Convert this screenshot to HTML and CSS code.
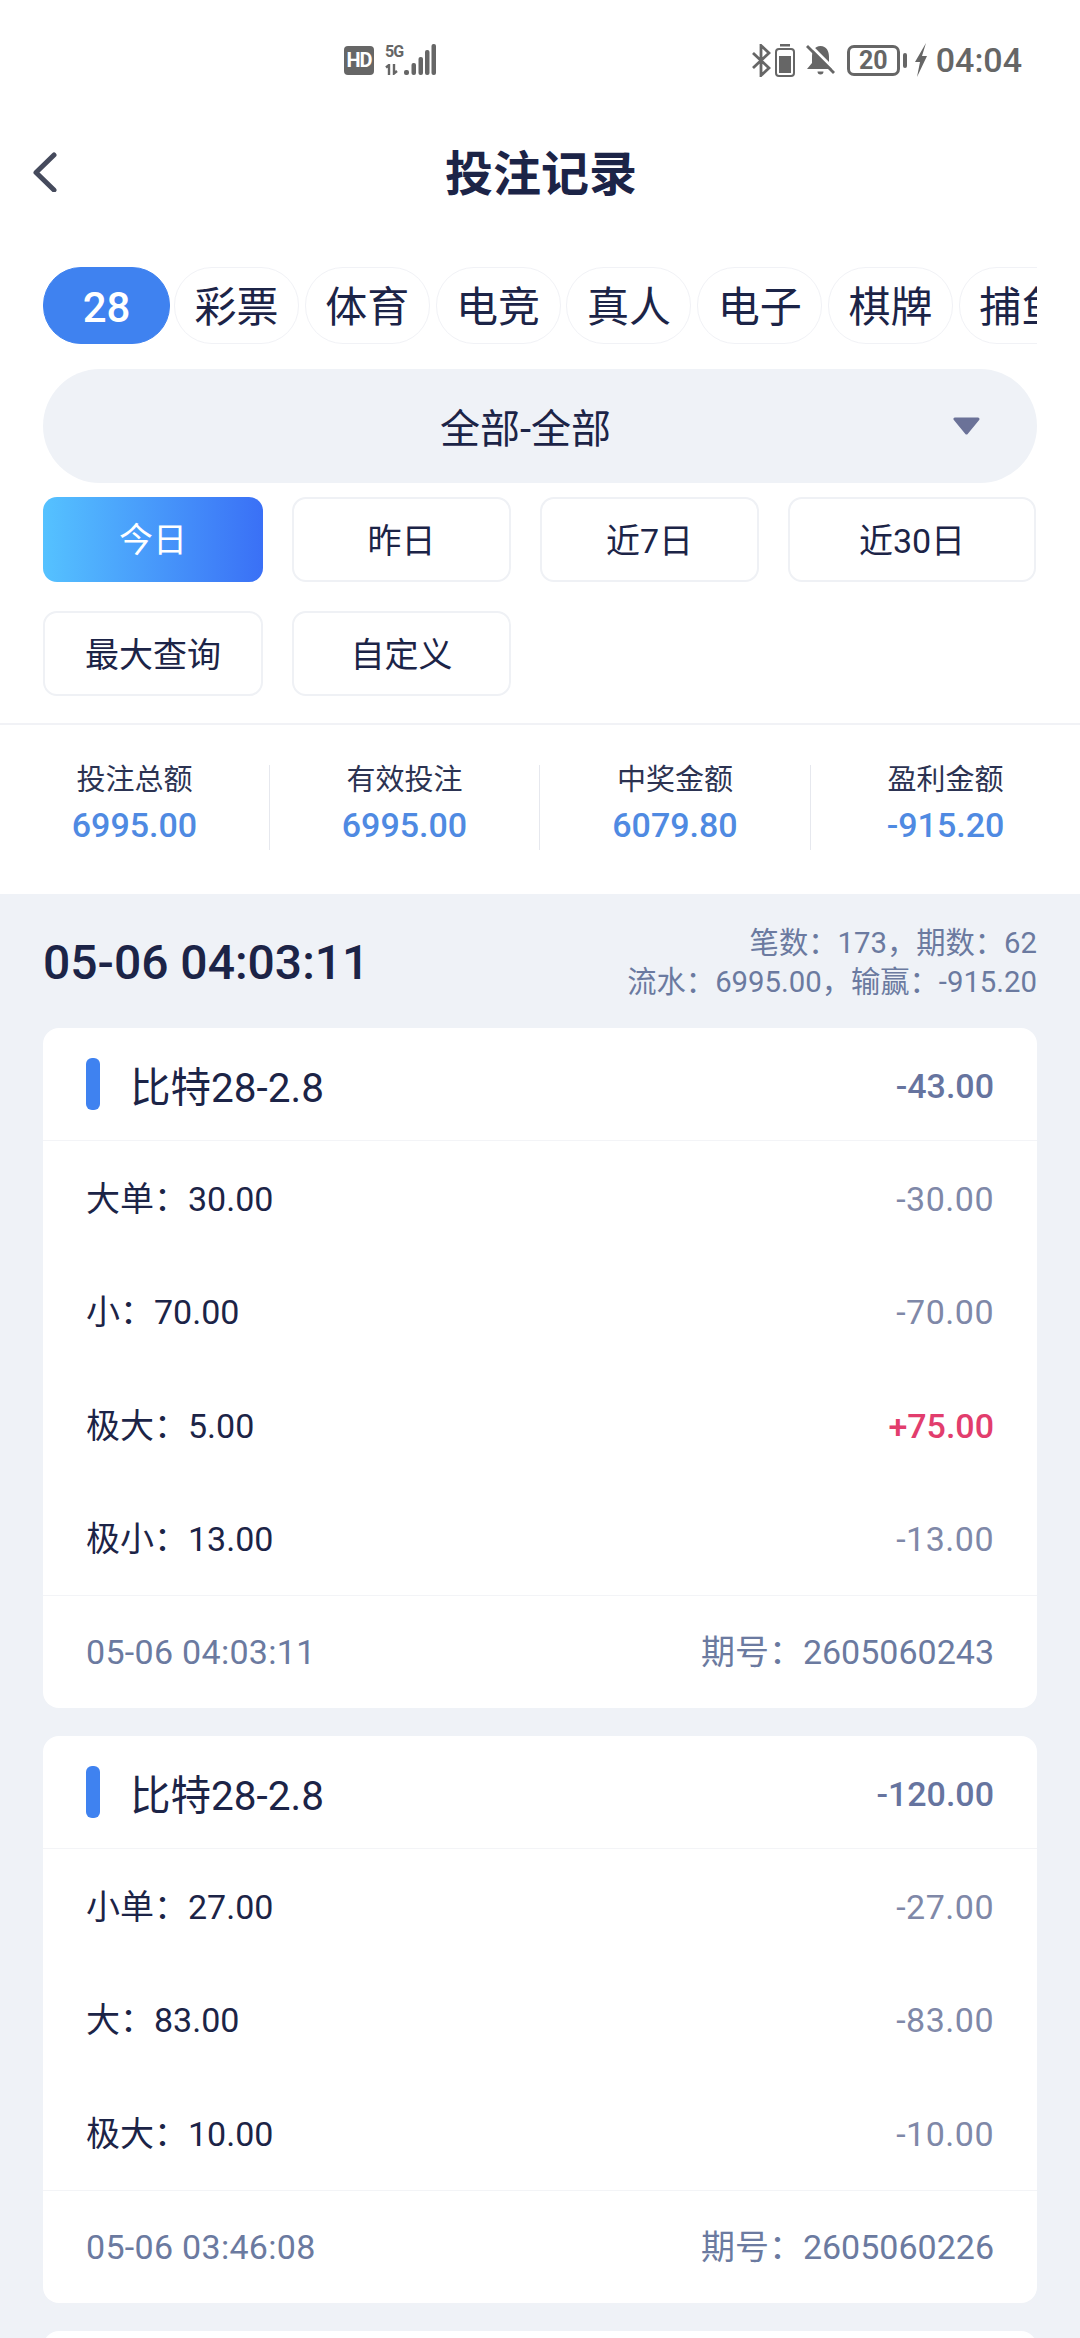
FILE: index.html
```html
<!DOCTYPE html>
<html lang="zh-CN">
<head>
  <meta charset="UTF-8" />
  <meta name="viewport" content="width=device-width, initial-scale=1.0"/>
  <title>投注记录</title>
  <link rel="stylesheet" href="styles.css">
</head>
<body>
  <div class="status-bar">
    <div class="status-left">
      <span class="hd-badge">HD</span>
      <div class="net">
        <span class="net-label">5G</span>
        <svg class="net-arrows" width="13" height="11" viewBox="0 0 13 11">
          <path d="M1 3.500 4 1V11M9 0V9.500L12 7" fill="none" stroke="#666" stroke-width="2.400"/>
        </svg>
      </div>
      <svg class="signal" width="32" height="32" viewBox="0 0 32 32">
        <rect x="0" y="26" width="5" height="5" rx="2" fill="#666"/>
        <rect x="7.500" y="19" width="4.500" height="12" rx="2" fill="#666"/>
        <rect x="14.500" y="13" width="4.500" height="18" rx="2" fill="#666"/>
        <rect x="21" y="6" width="4.500" height="25" rx="2" fill="#666"/>
        <rect x="27.500" y="0" width="4.500" height="31" rx="2" fill="#666"/>
      </svg>
    </div>
    <div class="status-right">
      <svg class="ic-bt" width="19" height="33" viewBox="0 0 19 33">
        <path d="M1 9 17 24 9 31.500V1.500L17 9 1 24" fill="none" stroke="#666" stroke-width="2.800"/>
      </svg>
      <svg class="ic-cell" width="20" height="33" viewBox="0 0 20 33">
        <rect x="5" y="0" width="10" height="2.500" fill="#666"/>
        <rect x="1" y="5" width="18" height="27" rx="3" fill="none" stroke="#666" stroke-width="2"/>
        <rect x="4" y="12" width="12" height="17" fill="#666"/>
      </svg>
      <svg class="ic-bell" width="29" height="30" viewBox="0 0 29 30">
        <path d="M14.500 1C8.500 1 6 6 6 12V18L1 24H28L23 18V12C23 6 20.500 1 14.500 1Z" fill="#666"/>
        <path d="M11.500 26.500H17.500A3 3 0 0 1 11.500 26.500Z" fill="#666"/>
        <path d="M4 0 30 26" stroke="#fff" stroke-width="3"/>
        <path d="M1 1 28 28" stroke="#666" stroke-width="2.800"/>
      </svg>
      <span class="battery">20</span>
      <span class="battery-nub"></span>
      <svg class="ic-bolt" width="13" height="34" viewBox="0 0 13 34">
        <path d="M12 0 1 19H6L3 34 13 13H8Z" fill="#666"/>
      </svg>
      <span class="clock">04:04</span>
    </div>
  </div>

  <div class="header">
    <svg class="back" width="24" height="40" viewBox="0 0 24 40">
      <path d="M21 3 3 20.500 21 38" fill="none" stroke="#454a5c" stroke-width="5" stroke-linecap="round" stroke-linejoin="round"/>
    </svg>
    <h1>投注记录</h1>
  </div>

  <div class="tabs">
    <div class="tab active">28</div>
    <div class="tab">彩票</div>
    <div class="tab">体育</div>
    <div class="tab">电竞</div>
    <div class="tab">真人</div>
    <div class="tab">电子</div>
    <div class="tab">棋牌</div>
    <div class="tab">捕鱼</div>
  </div>

  <div class="select">
    <span class="select-text">全部-全部</span>
    <svg class="select-arrow" width="29" height="18" viewBox="0 0 29 18">
      <path d="M3 2H26L14.500 16Z" fill="#6b7298" stroke="#6b7298" stroke-width="3" stroke-linejoin="round"/>
    </svg>
  </div>

  <div class="ranges">
    <div class="range active">今日</div>
    <div class="range">昨日</div>
    <div class="range">近7日</div>
    <div class="range">近30日</div>
    <div class="range">最大查询</div>
    <div class="range">自定义</div>
  </div>

  <div class="stats">
    <div class="stat">
      <div class="stat-label">投注总额</div>
      <div class="stat-value">6995.00</div>
    </div>
    <div class="stat">
      <div class="stat-label">有效投注</div>
      <div class="stat-value">6995.00</div>
    </div>
    <div class="stat">
      <div class="stat-label">中奖金额</div>
      <div class="stat-value">6079.80</div>
    </div>
    <div class="stat">
      <div class="stat-label">盈利金额</div>
      <div class="stat-value">-915.20</div>
    </div>
  </div>

  <div class="records">
    <div class="day-head">
      <div class="day-date">05-06 04:03:11</div>
      <div class="day-sum">
        <div>笔数：173，期数：62</div>
        <div>流水：6995.00，输赢：-915.20</div>
      </div>
    </div>

    <div class="card">
      <div class="card-head">
        <span class="card-bar"></span>
        <span class="card-title">比特28-2.8</span>
        <span class="card-total">-43.00</span>
      </div>
      <div class="row"><span>大单：30.00</span><span class="amount">-30.00</span></div>
      <div class="row"><span>小：70.00</span><span class="amount">-70.00</span></div>
      <div class="row"><span>极大：5.00</span><span class="amount win">+75.00</span></div>
      <div class="row"><span>极小：13.00</span><span class="amount">-13.00</span></div>
      <div class="card-foot"><span class="foot-time">05-06 04:03:11</span><span>期号：2605060243</span></div>
    </div>

    <div class="card">
      <div class="card-head">
        <span class="card-bar"></span>
        <span class="card-title">比特28-2.8</span>
        <span class="card-total">-120.00</span>
      </div>
      <div class="row"><span>小单：27.00</span><span class="amount">-27.00</span></div>
      <div class="row"><span>大：83.00</span><span class="amount">-83.00</span></div>
      <div class="row"><span>极大：10.00</span><span class="amount">-10.00</span></div>
      <div class="card-foot"><span class="foot-time">05-06 03:46:08</span><span>期号：2605060226</span></div>
    </div>

    <div class="card card-next"></div>
  </div>
</body>
</html>
```

FILE: styles.css
```css
html, body {
  margin: 0;
  height: 2338px;
  overflow: hidden;
}

body {
  background-color: #fff;
  color: #1c2447;
  font-family: Roboto, "Noto Sans CJK SC", sans-serif;
}

/* status bar */
.status-bar {
  height: 120px;
  padding: 0 58px 0 344px;
  display: flex;
  justify-content: space-between;
  align-items: center;
}

.status-left, .status-right {
  display: flex;
  align-items: center;
}

.hd-badge {
  width: 30px;
  height: 29px;
  background-color: #666;
  border-radius: 4px;
  color: #fff;
  font-size: 20px;
  font-weight: 700;
  letter-spacing: -1px;
  line-height: 29px;
  text-align: center;
}

.net {
  margin-left: 11px;
  width: 17px;
  display: flex;
  flex-direction: column;
  gap: 6px;
}

.net-label {
  color: #666;
  font-size: 16px;
  font-weight: 700;
  letter-spacing: -1px;
  line-height: 13px;
}

.signal {
  margin-left: 2px;
}

.ic-cell { margin-left: 4px; }
.ic-bell { margin-left: 11px; }

.battery {
  margin-left: 12px;
  width: 53px;
  height: 31px;
  box-sizing: border-box;
  border: 3px solid #666;
  border-radius: 7px;
  color: #666;
  font-size: 25px;
  font-weight: 700;
  line-height: 25px;
  text-align: center;
}

.battery-nub {
  margin-left: 3px;
  width: 4px;
  height: 15px;
  background-color: #666;
  border-radius: 2px;
}

.ic-bolt { margin-left: 7px; }

.clock {
  margin-left: 9px;
  color: #666;
  font-size: 34px;
  font-weight: 500;
}

/* title */
.header {
  height: 104px;
  padding-left: 33px;
  display: grid;
  grid-template-columns: 412px auto;
  align-items: center;
}

h1 {
  margin: 0 0 5px;
  font-size: 48px;
  font-weight: 700;
}

/* category tabs */
.tabs {
  margin: 43px 43px 0;
  display: flex;
  gap: 5.800px;
  overflow: hidden;
}

.tab {
  flex: 0 0 125px;
  height: 77px;
  box-sizing: border-box;
  border: 1px solid #f1f2f6;
  border-radius: 38px;
  font-size: 42px;
  line-height: 80px;
  text-align: center;
}

.tab.active {
  flex-basis: 127px;
  margin-right: -1.800px;
  background-color: #3f82f0;
  border-color: #3f82f0;
  color: #fff;
  font-weight: 500;
}

/* game select */
.select {
  margin: 25px 43px 0;
  height: 114px;
  padding: 0 56px;
  background-color: #eff2f7;
  border-radius: 57px;
  display: flex;
  align-items: center;
}

.select-text {
  flex: 1;
  font-size: 40px;
  text-align: center;
}

/* date range buttons */
.ranges {
  margin: 14px 43px 0;
  display: grid;
  grid-template-columns: 220px 219px 219px 248px;
  gap: 29px;
}

.range {
  height: 85px;
  box-sizing: border-box;
  background-color: #fff;
  border: 2px solid #eff1f5;
  border-radius: 14px;
  padding-top: 4px;
  font-size: 34px;
  line-height: 77px;
  text-align: center;
}

.range.active {
  background: linear-gradient(90deg, #55c2ff, #3a70f6);
  border: none;
  color: #fff;
  padding-top: 0;
  line-height: 87px;
}

/* totals */
.stats {
  margin-top: 27px;
  height: 171px;
  box-sizing: border-box;
  border-top: 2px solid #f1f2f6;
  padding-top: 40px;
  display: grid;
  grid-template-columns: 269px 270px 271px 270px;
  align-items: start;
}

.stat {
  height: 85px;
  text-align: center;
  border-left: 1px solid #e6e8ee;
}

.stat:first-child {
  border-left: none;
}

.stat-label {
  padding-top: 1px;
  color: #2c3352;
  font-size: 29px;
  line-height: 28px;
}

.stat-value {
  margin-top: 11px;
  color: #4f8ae2;
  font-size: 34px;
  font-weight: 500;
  line-height: 40px;
}

/* records list */
.records {
  background-color: #eff2f7;
  padding: 0 43px;
  height: 1444px;
}

.day-head {
  height: 134px;
  display: flex;
  justify-content: space-between;
  align-items: center;
}

.day-date {
  padding-top: 2px;
  font-size: 48px;
  font-weight: 500;
}

.day-sum {
  padding-top: 3px;
  color: #6b7aa0;
  font-size: 29.300px;
  line-height: 39px;
  text-align: right;
}

.card {
  background-color: #fff;
  border-radius: 16px;
  margin-bottom: 28px;
}

.card-head {
  height: 113px;
  box-sizing: border-box;
  padding: 0 43px;
  border-bottom: 1px solid #f3f4f7;
  display: flex;
  align-items: center;
}

.card-bar {
  width: 14px;
  height: 52px;
  background-color: #3f82f0;
  border-radius: 6px;
}

.card-title {
  flex: 1;
  margin-left: 30px;
  font-size: 40.500px;
}

.card-total {
  padding-top: 4px;
  color: #66749f;
  font-size: 34px;
  font-weight: 500;
}

.row {
  height: 113.500px;
  box-sizing: border-box;
  padding: 2px 43px 0;
  display: flex;
  justify-content: space-between;
  align-items: center;
  font-size: 34px;
  line-height: 40px;
}

.amount {
  color: #7f88a8;
  letter-spacing: 0.500px;
}

.amount.win {
  color: #e23d6d;
  font-weight: 500;
  letter-spacing: 0;
}

.card-foot {
  height: 112px;
  padding: 0 43px;
  border-top: 1px solid #f3f4f7;
  display: flex;
  justify-content: space-between;
  align-items: center;
  color: #6b7aa0;
  font-size: 34px;
  line-height: 40px;
}

.foot-time {
  letter-spacing: 0.300px;
}

.card-next {
  height: 60px;
}
```
